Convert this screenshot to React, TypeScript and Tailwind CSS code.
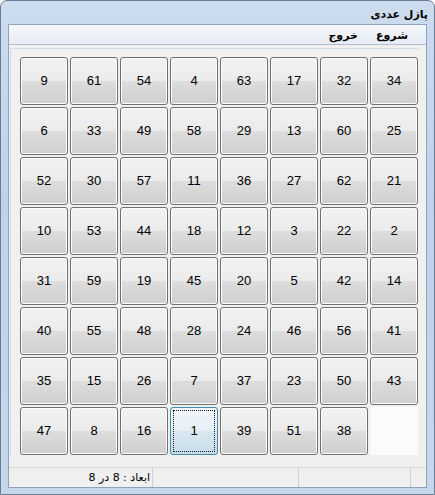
import React from 'react';

const rows = [
  [9, 61, 54, 4, 63, 17, 32, 34],
  [6, 33, 49, 58, 29, 13, 60, 25],
  [52, 30, 57, 11, 36, 27, 62, 21],
  [10, 53, 44, 18, 12, 3, 22, 2],
  [31, 59, 19, 45, 20, 5, 42, 14],
  [40, 55, 48, 28, 24, 46, 56, 41],
  [35, 15, 26, 7, 37, 23, 50, 43],
  [47, 8, 16, 1, 39, 51, 38, 0],
];

const Tile = ({ n }: { n: number }) => {
  if (n === 0) return <div className="w-[48px] h-[48px] bg-[#fbfbfb]" />;
  if (n === 1)
    return (
      <div className="w-[48px] h-[48px] rounded-[3px] border border-[#3d8ca8] bg-[linear-gradient(to_bottom,#f1f7fb_0%,#e6f0f6_50%,#d8e8f1_51%,#c9dce8_100%)] p-[2px]">
        <div className="w-full h-full border border-dotted border-[#1a1a1a] flex items-center justify-center text-[13px] text-black">
          {n}
        </div>
      </div>
    );
  return (
    <div className="w-[48px] h-[48px] rounded-[3px] border border-[#707070] bg-[linear-gradient(to_bottom,#f2f2f2_0%,#ebebeb_50%,#dddddd_51%,#cfcfcf_100%)] shadow-[inset_0_0_0_1px_#fcfcfc] flex items-center justify-center text-[13px] text-black">
      {n}
    </div>
  );
};

export default function App() {
  return (
    <div className="w-[435px] h-[495px] bg-white font-['Liberation_Sans',sans-serif]">
      <div className="w-[435px] h-[495px] rounded-t-[7px] border border-[#6b7d93] bg-[linear-gradient(to_bottom,#cddcef_0%,#bfd2e9_40%,#c6d7eb_100%)] flex flex-col">
        {/* title */}
        <div dir="rtl" className="h-[23px] flex items-center px-[6px] pt-[5px] font-['DejaVu_Sans',sans-serif] text-[11px] font-bold text-black">
          پازل عددی
        </div>
        {/* client */}
        <div className="mx-[7px] flex-1 border border-[#8da2bd] bg-[#f0f0f0] flex flex-col">
          <div dir="rtl" className="h-[20px] border-b border-[#b6bccc] bg-[linear-gradient(to_bottom,#f6f8fc,#e7ecf6)] flex items-center gap-[18px] pr-[18px] pt-[3px] font-['DejaVu_Sans',sans-serif] text-[11px] font-bold text-black">
            <span>شروع</span>
            <span>خروج</span>
          </div>
          <div className="flex-1 pt-[3px]">
            <div className="ml-[1px] w-[409px] h-[409px] border-l border-t border-[#d5dde6] pl-[9px] pt-[8px]">
              <div className="grid grid-cols-[repeat(8,48px)] gap-[2px]">
                {rows.flat().map((n, i) => (
                  <Tile key={i} n={n} />
                ))}
              </div>
            </div>
          </div>
          <div className="h-[20px] border-t border-[#d7d7d7] flex text-[12px] text-black">
            <div dir="rtl" className="w-[144px] border-r border-[#d0d0d0] flex items-center pr-[2px] pt-[2px]">
              <span className="font-['DejaVu_Sans',sans-serif] text-[11px]">ابعاد : 8 در 8</span>
            </div>
            <div className="w-[146px] border-r border-[#d0d0d0]" />
            <div className="w-[112px] border-r border-[#d0d0d0]" />
            <div className="flex-1" />
          </div>
        </div>
        <div className="h-[6px]" />
      </div>
    </div>
  );
}
